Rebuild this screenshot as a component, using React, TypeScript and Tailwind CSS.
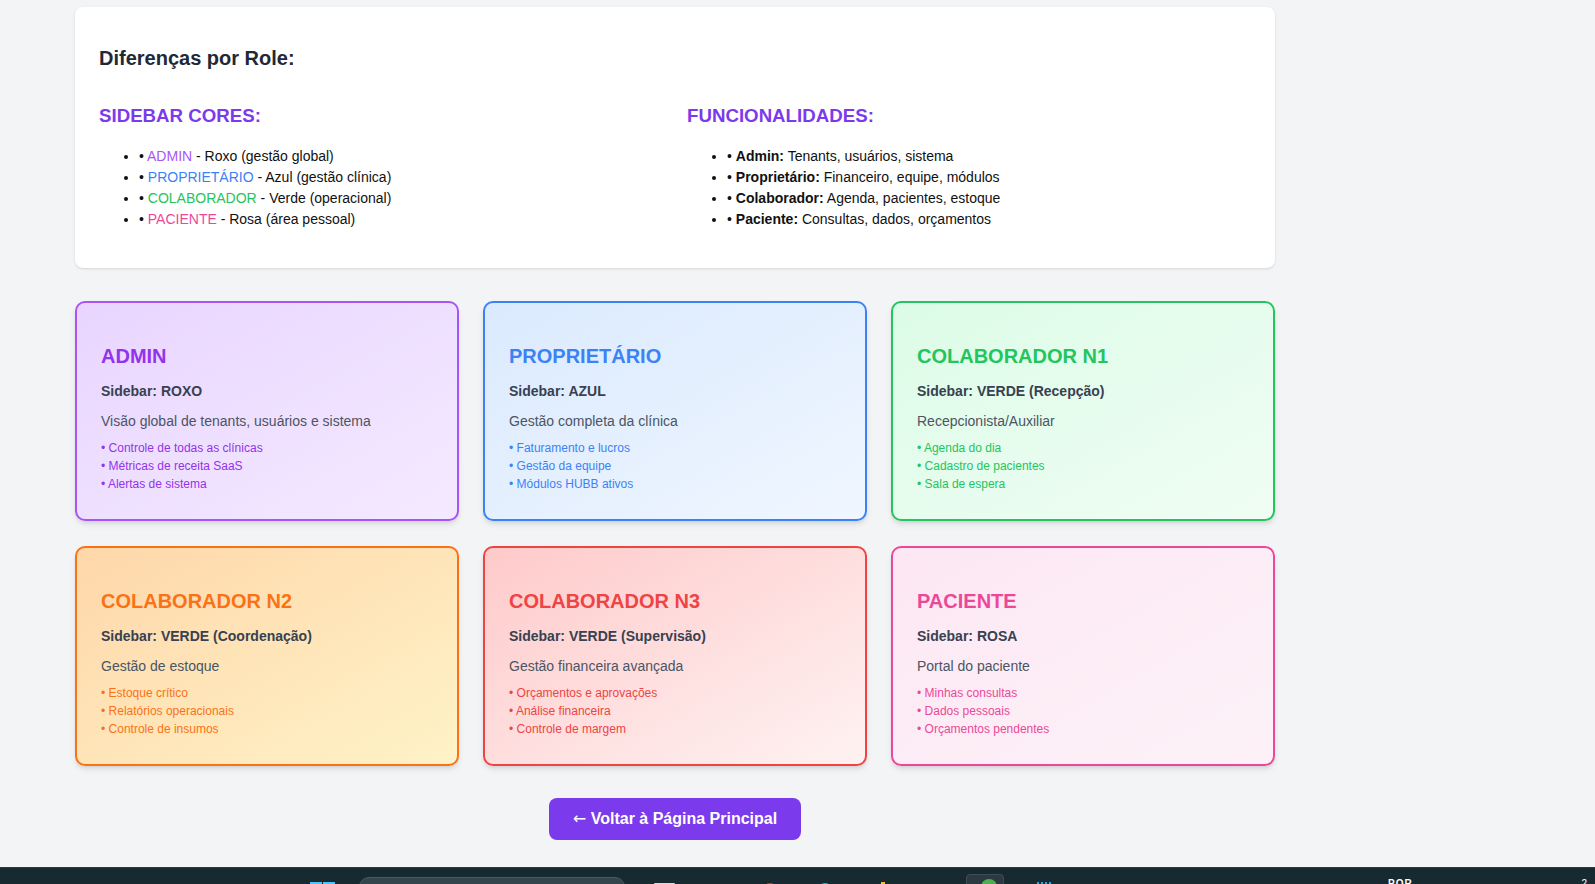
import React from "react";

type Role = {
  title: string;
  sidebar: string;
  description: string;
  features: string[];
  card: string;
  accent: string;
};

const roles: Role[] = [
  {
    title: "ADMIN",
    sidebar: "Sidebar: ROXO",
    description: "Visão global de tenants, usuários e sistema",
    features: ["Controle de todas as clínicas", "Métricas de receita SaaS", "Alertas de sistema"],
    card: "border-[#a855f7] from-[#e9d5ff] to-[#f4eaff]",
    accent: "text-[#9333ea]",
  },
  {
    title: "PROPRIETÁRIO",
    sidebar: "Sidebar: AZUL",
    description: "Gestão completa da clínica",
    features: ["Faturamento e lucros", "Gestão da equipe", "Módulos HUBB ativos"],
    card: "border-[#3b82f6] from-[#dbeafe] to-[#eff6ff]",
    accent: "text-[#3b82f6]",
  },
  {
    title: "COLABORADOR N1",
    sidebar: "Sidebar: VERDE (Recepção)",
    description: "Recepcionista/Auxiliar",
    features: ["Agenda do dia", "Cadastro de pacientes", "Sala de espera"],
    card: "border-[#22c55e] from-[#dcfce7] to-[#f0fdf4]",
    accent: "text-[#22c55e]",
  },
  {
    title: "COLABORADOR N2",
    sidebar: "Sidebar: VERDE (Coordenação)",
    description: "Gestão de estoque",
    features: ["Estoque crítico", "Relatórios operacionais", "Controle de insumos"],
    card: "border-[#f97316] from-[#fed7aa] to-[#fef3c7]",
    accent: "text-[#f97316]",
  },
  {
    title: "COLABORADOR N3",
    sidebar: "Sidebar: VERDE (Supervisão)",
    description: "Gestão financeira avançada",
    features: ["Orçamentos e aprovações", "Análise financeira", "Controle de margem"],
    card: "border-[#ef4444] from-[#fecaca] to-[#fef2f2]",
    accent: "text-[#ef4444]",
  },
  {
    title: "PACIENTE",
    sidebar: "Sidebar: ROSA",
    description: "Portal do paciente",
    features: ["Minhas consultas", "Dados pessoais", "Orçamentos pendentes"],
    card: "border-[#ec4899] from-[#fce7f3] to-[#fdf2f8]",
    accent: "text-[#ec4899]",
  },
];

function RoleCard({ role }: { role: Role }) {
  return (
    <div className={`rounded-[10px] border-2 bg-linear-to-br shadow-md px-6 pt-[39px] pb-[26px] ${role.card}`}>
      <h3 className={`text-xl font-bold leading-7 mb-[11px] ${role.accent}`}>{role.title}</h3>
      <p className="text-sm font-bold leading-5 text-[#374151] mb-[10px]">{role.sidebar}</p>
      <p className="text-sm leading-5 text-[#4b5563] mb-2">{role.description}</p>
      <ul className={`text-xs leading-[18px] ${role.accent}`}>
        {role.features.map((f) => (
          <li key={f}>• {f}</li>
        ))}
      </ul>
    </div>
  );
}

// barra de tarefas do Windows, cortada na parte de baixo da captura
function Taskbar() {
  return (
    <div className="h-[17px] bg-[#182a31] border-t border-[#2c3b42] overflow-hidden flex items-start pl-[310px]">
      <div className="mt-[14px] grid grid-cols-2 gap-[1px]">
        <span className="w-[12px] h-[10px] bg-[#4cc2ff]" />
        <span className="w-[12px] h-[10px] bg-[#4cc2ff]" />
      </div>
      <div className="ml-[24px] mt-[9px] w-[266px] h-[20px] rounded-t-[10px] bg-[#34464c] border border-[#4a5a60]" />
      <span className="ml-[29px] mt-[15px] w-[21px] h-[8px] bg-[#d9d9d9] rounded-[1px]" />
      <span className="ml-[87px] mt-[15px] w-[16px] h-[16px] rounded-full bg-[#e3302f]" />
      <span className="ml-[40px] mt-[15px] w-[14px] h-[14px] rounded-full bg-[#1fb8cf]" />
      <span className="ml-[49px] mt-[14px] w-[4px] h-[6px] bg-[#f0c419]" />
      <div className="ml-[81px] mt-[6px] w-[38px] h-[20px] rounded-[4px] bg-[#2a3a40] border border-[#3e4d53] flex items-start pl-[7px]">
        <span className="mt-[11px] w-[12px] h-[12px] rounded-full bg-[#e53935]" />
        <span className="-ml-[5px] mt-[4px] w-[16px] h-[16px] rounded-full bg-[#4caf50]" />
      </div>
      <div className="ml-[33px] mt-[14px] flex gap-[2px]">
        <span className="w-[2px] h-[6px] bg-[#29a8e0]" />
        <span className="w-[2px] h-[6px] bg-[#29a8e0]" />
        <span className="w-[2px] h-[6px] bg-[#29a8e0]" />
        <span className="w-[2px] h-[6px] bg-[#29a8e0]" />
      </div>
      <span className="ml-[337px] mt-[11px] text-[10px] leading-none font-bold text-white tracking-[1px]">POR</span>
      <span className="ml-auto mr-[8px] mt-[11px] text-[10px] leading-none text-white">2</span>
    </div>
  );
}

export default function App() {
  return (
    <div className="h-[884px] flex flex-col bg-[#f3f4f6] overflow-hidden font-['Liberation_Sans',Arial,sans-serif]">
      <main className="flex-1 overflow-hidden">
        <div className="ml-[75px] w-[1200px] pt-[7px]">
          {/* Diferenças por role */}
          <div className="bg-white rounded-lg shadow-sm px-6 pt-[37px] pb-[38px]">
            <h2 className="text-xl font-bold leading-7 text-[#1f2937] mb-[30px]">Diferenças por Role:</h2>
            <div className="grid grid-cols-2 gap-6">
              <div>
                <h4 className="text-[18.7px] font-bold leading-7 text-[#7c3aed] mb-4">SIDEBAR CORES:</h4>
                <ul className="list-disc pl-10 text-sm leading-[21px] text-[#111]">
                  <li>• <span className="text-[#a855f7]">ADMIN</span> - Roxo (gestão global)</li>
                  <li>• <span className="text-[#3b82f6]">PROPRIETÁRIO</span> - Azul (gestão clínica)</li>
                  <li>• <span className="text-[#22c55e]">COLABORADOR</span> - Verde (operacional)</li>
                  <li>• <span className="text-[#ec4899]">PACIENTE</span> - Rosa (área pessoal)</li>
                </ul>
              </div>
              <div>
                <h4 className="text-[18.7px] font-bold leading-7 text-[#7c3aed] mb-4">FUNCIONALIDADES:</h4>
                <ul className="list-disc pl-10 text-sm leading-[21px] text-[#111]">
                  <li>• <strong>Admin:</strong> Tenants, usuários, sistema</li>
                  <li>• <strong>Proprietário:</strong> Financeiro, equipe, módulos</li>
                  <li>• <strong>Colaborador:</strong> Agenda, pacientes, estoque</li>
                  <li>• <strong>Paciente:</strong> Consultas, dados, orçamentos</li>
                </ul>
              </div>
            </div>
          </div>

          {/* Cards por role */}
          <div className="grid grid-cols-3 gap-x-6 gap-y-[25px] mt-[33px]">
            {roles.map((r) => (
              <RoleCard key={r.title} role={r} />
            ))}
          </div>

          <div className="flex justify-center mt-8">
            <button className="h-[42px] px-6 rounded-lg bg-[#7c3aed] text-white text-base font-bold">
              <span className="font-['DejaVu_Sans',sans-serif] font-normal">←</span> Voltar à Página Principal
            </button>
          </div>
        </div>
      </main>
      <Taskbar />
    </div>
  );
}
